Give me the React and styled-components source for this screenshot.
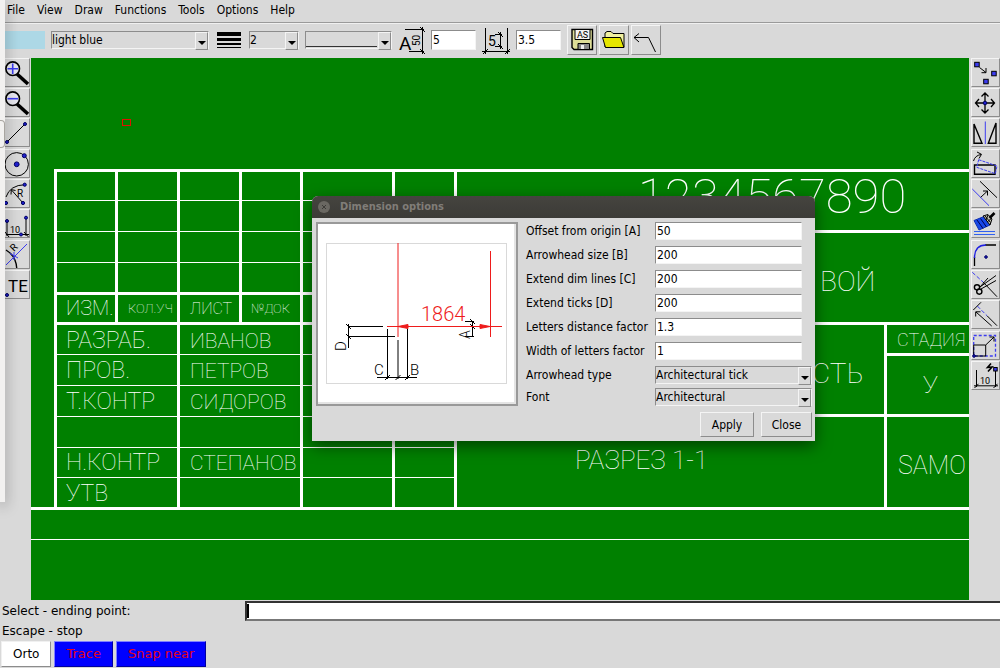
import React from "react";
import styled, { createGlobalStyle, css } from "styled-components";

const face = "#d9d9d9";
const uiFont = '"DejaVu Sans Condensed", "DejaVu Sans", sans-serif';
const drawingFont = 'Roboto, "Liberation Sans", sans-serif';
const blue = "#3c3cf0";

const GlobalStyle = createGlobalStyle`
  * { box-sizing: border-box; }
  body {
    margin: 0;
    background: ${face};
    color: #000;
    font: 12px/16px ${uiFont};
    overflow: hidden;
  }
  button, input, select { font: inherit; color: inherit; margin: 0; border-radius: 0; }
`;

const raised = css`
  border: 1px solid;
  border-color: #f4f4f4 #8c8c8c #8c8c8c #f4f4f4;
`;
const sunken = css`
  border: 1px solid;
  border-color: #8c8c8c #f4f4f4 #f4f4f4 #8c8c8c;
`;

const Window = styled.div`
  position: relative;
  display: flex;
  flex-direction: column;
  min-height: 100vh;
`;

const MenuBar = styled.nav`
  display: flex;
  gap: 12px;
  padding: 2px 7px 4px;
  border-bottom: 1px solid #9a9a9a;
`;
const MenuItem = styled.a`
  color: inherit;
  text-decoration: none;
`;

const Toolbar = styled.div`
  display: flex;
  align-items: center;
  gap: 6px;
  padding: 1px 5px 3px;
  border-top: 1px solid #f0f0f0;
`;
const Swatch = styled.span`
  width: 40px;
  height: 18px;
  background: #add8e6;
`;
const ButtonGroup = styled.div`
  display: flex;
  gap: 2px;
`;
const ToolIcon = styled.svg`
  display: block;
  flex: none;
  overflow: visible;
  fill: none;
  stroke: #000;
  text { stroke: none; fill: #000; font-family: ${drawingFont}; font-weight: 400; }
`;

const SelectBox = styled.span`
  position: relative;
  display: block;
  flex: none;
  width: ${(p) => p.$width}px;
  height: 18px;
  ${sunken}
  &::before {
    content: "";
    position: absolute;
    top: 0;
    right: 0;
    width: 11px;
    height: 16px;
    background: ${face};
    ${raised}
    pointer-events: none;
  }
  &::after {
    content: "";
    position: absolute;
    right: 2px;
    bottom: 3px;
    border: solid transparent;
    border-width: 4px 4px 0;
    border-top-color: #000;
    pointer-events: none;
  }
`;
const SelectField = styled.select`
  display: block;
  appearance: none;
  width: 100%;
  height: 16px;
  padding: 0 12px 0 0;
  border: 0;
  outline: 0;
  line-height: 16px;
  background: ${(p) => (p.$line ? "linear-gradient(#333, #333) 0 14px / calc(100% - 14px) 1px no-repeat" : face)};
`;
const TextField = styled.input`
  width: ${(p) => p.$width}px;
  height: ${(p) => p.$height}px;
  padding: 0 1px;
  background: #fff;
  outline: 0;
  ${sunken}
`;

const Workspace = styled.div`
  display: flex;
  height: 542px;
`;
const ToolColumn = styled.div`
  flex: none;
  width: 31px;
  padding-left: ${(p) => p.$inset}px;
`;
const ToolButton = styled.button`
  display: block;
  width: ${(p) => p.$width || 29}px;
  height: ${(p) => p.$height || 29}px;
  padding: 0;
  background: ${face};
  ${raised}
  ${ToolColumn} & { margin-bottom: 1px; }
  ${ToolColumn} &:nth-child(3n) { margin-bottom: 2px; }
`;
const Canvas = styled.main`
  flex: 1;
  min-width: 0;
  overflow: hidden;
  background: #008000;
`;
const Drawing = styled.svg`
  display: block;
  fill: none;
  stroke: #fff;
  text { stroke: none; fill: #fff; font-family: ${drawingFont}; font-weight: 100; }
`;

const StatusArea = styled.footer`
  padding: 1px 0 0 1px;
  font-family: "DejaVu Sans", sans-serif;
`;
const StatusRow = styled.div`
  display: flex;
  align-items: center;
`;
const Prompt = styled.label`
  width: 244px;
  padding-left: 1px;
  line-height: 20px;
`;
const CommandInput = styled.input`
  flex: 1;
  min-width: 0;
  height: 20px;
  padding: 0 2px;
  border: 2px solid #333;
  border-right: 0;
  border-bottom-color: #777;
  outline: 0;
  background: linear-gradient(#000, #000) 0 1px / 2px 14px no-repeat #fff;
`;
const ModeRow = styled.div`
  display: flex;
  gap: 3px;
`;
const ModeButton = styled.button`
  height: 26px;
  padding: 0 11px;
  background: ${(p) => (p.$on ? "#0000ff" : "#fff")};
  color: ${(p) => (p.$on ? "#e00020" : "#000")};
  font-size: ${(p) => (p.$on ? 13 : 12)}px;
  border: 1px solid;
  border-color: ${(p) => (p.$on ? "#8080ff #0000a0 #0000a0 #8080ff" : "#f0f0f0 #8c8c8c #8c8c8c #f0f0f0")};
`;

const BackWindow = styled.div`
  position: absolute;
  top: 0;
  left: 0;
  width: 5px;
  height: 502px;
  background: #f2f1f0;
  box-shadow: 0 4px 14px rgba(0, 0, 0, 0.4);
`;
const BackScroll = styled.div`
  width: 5px;
  height: 28px;
  margin-top: 120px;
  border: 1px solid #a8a5a0;
  border-left: 0;
  border-radius: 0 4px 4px 0;
`;

const Dialog = styled.section`
  position: absolute;
  top: 196px;
  left: 312px;
  width: 503px;
  background: ${face};
  border-radius: 6px 6px 0 0;
  box-shadow: 0 5px 16px rgba(0, 0, 0, 0.5);
`;
const TitleBar = styled.header`
  display: flex;
  align-items: center;
  gap: 10px;
  height: 22px;
  padding-left: 6px;
  border-radius: 6px 6px 0 0;
  background: linear-gradient(#45443f, #3c3b37);
  color: #807d78;
  font: bold 11px/22px ${uiFont};
`;
const CloseDot = styled.button`
  width: 12px;
  height: 12px;
  padding: 0;
  border: 0;
  border-radius: 50%;
  background: #6a6862;
  svg { display: block; stroke: #3c3b37; }
`;
const DialogBody = styled.form`
  display: flex;
  gap: 8px;
  padding: 0 3px 4px 4px;
`;
const PreviewFrame = styled.div`
  flex: none;
  width: 202px;
  height: 184px;
  margin-top: 4px;
  border: 2px solid #999;
  background: #fff;
  box-shadow: inset -2px -2px #e4e4e4;
`;
const Preview = styled.svg`
  display: block;
  fill: none;
  stroke: #000;
  text { stroke: none; fill: #000; font-family: ${drawingFont}; font-weight: 300; }
`;
const PreviewValue = styled.g`
  text { fill: #ee1c1c; }
`;
const Form = styled.div`
  flex: 1;
  padding-top: 1px;
`;
const FormRow = styled.div`
  display: flex;
  align-items: center;
  height: ${(p) => (p.$tight ? 22 : 24)}px;
`;
const ChoiceRows = styled.div`
  padding-top: 1px;
`;
const FormLabel = styled.label`
  width: 129px;
`;
const Actions = styled.div`
  display: flex;
  justify-content: flex-end;
  gap: 7px;
  padding-top: 4px;
`;
const PushButton = styled.button`
  width: ${(p) => p.$width}px;
  height: 25px;
  padding: 0;
  background: ${face};
  ${raised}
`;

function Dropdown({ width, value, label, id, line }) {
  return (
    <SelectBox $width={width}>
      <SelectField id={id} aria-label={label} $line={line} defaultValue={value}>
        <option value={value}>{value}</option>
      </SelectField>
    </SelectBox>
  );
}

const Dot = ({ x, y, r = 2 }) => <circle cx={x} cy={y} r={r} fill="#2020d0" stroke="#000060" strokeWidth="1" />;

function Glass({ plus }) {
  return (
    <>
      <path d="M16 16L27 26" strokeWidth="3.6" />
      <circle cx="11.7" cy="10.7" r="6.8" strokeWidth="1.6" fill="#e8e8f0" />
      <path d={plus ? "M6.5 10.7H17M11.7 5.5V16" : "M6.5 10.7H17"} stroke={blue} strokeWidth="1.6" />
    </>
  );
}

const drawTools = [
  ["Zoom in", <Glass plus />],
  ["Zoom out", <Glass />],
  ["Line", <><path d="M6 24L24 6" /><Dot x={6} y={24} r={1.5} /><Dot x={24} y={6} r={1.5} /></>],
  ["Circle", <><circle cx="15.7" cy="15.3" r="11.7" /><Dot x={15.7} y={15.3} r={2.4} /><Dot x={23.3} y={6.7} /></>],
  ["Arc", <>
    <path d="M5 18Q9 6 24 5.7M22 24L10.7 11.2M10 15.5L10.3 10.6 14.5 11.5" />
    <text x="16" y="18" fontSize="10">R</text>
    <Dot x={23.7} y={5.7} r={1.6} /><Dot x={22} y={24} r={1.6} /><Dot x={5} y={24} r={1.6} />
  </>],
  ["Dimension", <>
    <path d="M6 12V27M25 9V27M5 25.5H28M23 23L27.5 28M4 23L8 28" />
    <text x="9" y="24" fontSize="9">10</text>
    <Dot x={6} y={12} r={1.5} /><Dot x={25} y={8.7} r={1.5} /><Dot x={20} y={25.5} r={1.5} />
  </>],
  ["Radius dimension", <>
    <path d="M5 10Q15 16 15.7 28" strokeWidth="1.4" />
    <path d="M5 25L26 4" stroke={blue} />
    <path d="M9 13.5L17 18M13 12V20" stroke={blue} />
    <text fontSize="10" transform="translate(13 12) rotate(-45)">R</text>
  </>],
  ["Text", <><text x="7" y="22" fontSize="17">TE</text><Dot x={6} y={25} r={1.5} /></>],
];

const Square = ({ x, y }) => <rect x={x - 2} y={y - 2} width="4.5" height="4.5" fill={blue} />;

const editTools = [
  ["Copy", <>
    <Square x={5.7} y={6.3} /><Square x={22.7} y={15.3} /><Square x={14.7} y={23.3} />
    <path d="M8.5 9.5L15 14.5M10.5 14.7H15V10" />
  </>],
  ["Move", <>
    <path d="M14 6V24M5 15H23M10.5 8.5L14 5 17.5 8.5M10.5 21.5L14 25 17.5 21.5M8 11L4.5 15 8 19M20 11L23.5 15 20 19" strokeWidth="1.3" />
    <Dot x={14} y={15} r={1.8} />
  </>],
  ["Mirror", <>
    <path d="M3 6V25.3H11ZM25 5V25.3H17.3Z" strokeWidth="1.4" />
    <path d="M14.3 3.5V26" stroke={blue} />
  </>],
  ["Rotate", <>
    <path d="M3.5 16H24V25.3H3.5Z" strokeWidth="1.4" />
    <path d="M7.7 10.7L26 17 24.3 24.7 5.7 18.3Z" stroke={blue} strokeDasharray="3 1" />
    <path d="M2.5 12Q4 6.5 10 5.5M6 3L10.5 5.3 8 9.5" />
  </>],
  ["Offset", <>
    <path d="M1.3 10L18 26.7" stroke={blue} /><path d="M9 2.3L26 18.7M9.7 18.3L16.5 12M12 12H16.5V16.5" />
  </>],
  ["Match properties", <>
    <path d="M3 11.5L13 7.5 19 16 8 21Z" fill="#1848e8" stroke="#1030b0" />
    <path d="M6 11L12 19.5M9.5 9.5L15.5 18" stroke="#000050" />
    <path d="M12 7L17 5.5 21 10 19 16Z" fill="#c8c8b8" />
    <path d="M14 7L19.5 13.5M17 6L15 11M21 9L16 13" />
    <path d="M18.5 9L23.5 4" strokeWidth="2.6" />
    <path d="M3 22.5H24M3 25.5H24" stroke="#3060f0" />
  </>],
  ["Fillet", <>
    <path d="M3.5 26V17M14 5H25" strokeWidth="1.3" /><path d="M3.5 18Q3.5 5 15 5" stroke="#2020e0" strokeWidth="1.4" />
    <Dot x={15} y={17} r={1.3} />
  </>],
  ["Trim", <>
    <path d="M1.3 2.3L12 12" stroke={blue} strokeDasharray="4 2" />
    <path d="M12 12L26 26.7M9 17L25 5.5M10 19L25 10.5M9 17L17 8" />
    <circle cx="6" cy="17.3" r="2.6" strokeWidth="1.4" /><circle cx="8.3" cy="21.6" r="2.6" strokeWidth="1.4" />
  </>],
  ["Extend", <>
    <path d="M2.3 10L10 2.3M16 15.7L26 25.7M20.7 26L5 12M4.7 16.5V11.8H9.5" />
    <path d="M6.3 6L16 15.7" stroke={blue} strokeDasharray="4 2" />
  </>],
  ["Scale", <>
    <path d="M2.7 4.5H24.5V25H2.7Z" stroke={blue} strokeDasharray="3 2" strokeWidth="1.3" />
    <path d="M2.7 14H14.7V25H2.7ZM14.7 14L23 6M18.5 6H23V10.5" />
    <Dot x={3} y={25} r={1.3} />
  </>],
  ["Edit dimension", <>
    <path d="M5.5 9V26M24.5 8V26M3 24.8H27M3.5 27L7.5 22.8M22.5 27L26.5 22.8" />
    <text x="9" y="23" fontSize="9">10</text>
    <path d="M20 2.5L16.5 6.5 21 6 17 10.5" strokeWidth="1.6" />
    <rect x="22.7" y="6.5" width="3.5" height="3.5" fill={blue} />
  </>],
];

function IconButton({ label, children, width = 29, height = 29 }) {
  return (
    <ToolButton type="button" aria-label={label} $width={width} $height={height}>
      <ToolIcon width={width - 2} height={height - 2} viewBox={`1 1 ${width - 2} ${height - 2}`}>{children}</ToolIcon>
    </ToolButton>
  );
}

const labels = [
  [66, 315, 20, "ИЗМ."], [128, 313, 13, "КОЛ.УЧ"], [190, 314, 16, "ЛИСТ"], [251, 313, 13, "№ДОК"],
  [66, 348, 23, "РАЗРАБ."], [190, 348, 21, "ИВАНОВ"],
  [66, 378, 23, "ПРОВ."], [190, 378, 21, "ПЕТРОВ"],
  [66, 409, 23, "Т.КОНТР"], [190, 409, 21, "СИДОРОВ"],
  [66, 470, 23, "Н.КОНТР"], [190, 470, 21, "СТЕПАНОВ"],
  [66, 501, 23, "УТВ"],
  [638, 213, 49, "1234567890"],
  [820, 291, 28, "ВОЙ"], [812, 383, 28, "СТЬ"],
  [897, 346, 18, "СТАДИЯ"], [923, 393, 24, "У"], [898, 474, 25, "SAMO"],
  [575, 469, 26, "РАЗРЕЗ 1-1"],
];

function SheetDrawing() {
  return (
    <Drawing width="1600" height="542" viewBox="31 58 1600 542" shapeRendering="crispEdges">
      <path strokeWidth="1" d="M55 200.5H455M55 231.5H455M55 262.5H455M55 354.5H455M55 385.5H455M55 416.5H455M55 447.5H455M55 477.5H455M31 539.5H1631" />
      <path strokeWidth="3" strokeLinecap="square" d="M55.5 170.5H1631M55.5 170.5V508.5M116.5 170.5V323.5M178.5 170.5V508.5M240.5 170.5V323.5M301.5 170.5V508.5M393.5 170.5V508.5M455.5 170.5V508.5M55.5 293.5H455.5M55.5 323.5H1631M455.5 231.5H1631M455.5 415.5H1631M885.5 323.5V508.5M885.5 354.5H1631M31 508.5H1631" />
      <rect x="122.5" y="119.5" width="8" height="6" stroke="#e01000" />
      {labels.map(([x, y, size, text]) => (
        <text key={text} x={x} y={y} fontSize={size}>{text}</text>
      ))}
    </Drawing>
  );
}

function DimensionPreview() {
  return (
    <Preview width="198" height="180" viewBox="318 224 198 180">
      <rect x="326.5" y="243.5" width="180" height="140" stroke="#d9d9d9" />
      <path d="M348 326.5H383M348 336.5H395M348.5 324V348M387.5 329V379M398 340V379M407.5 329V379M377 377.5H417M472.5 321V337M465 321.5H474M465 336.5H474" />
      <path d="M346 324L351 329M346 334L351 339M385 380L390 375M395.5 380L400.5 375M405 380L410 375M470 319L475 324M470 324L475 329" />
      <PreviewValue stroke="#ee1c1c">
        <path d="M398 243V337M490.5 251V337M387 326.5H502" />
        <path d="M398 326.5L408 324.5V328.5ZM490 326.5L480 324.5V328.5Z" fill="#ee1c1c" />
        <text x="421" y="321" fontSize="20">1864</text>
      </PreviewValue>
      <text x="374" y="375" fontSize="15">C</text>
      <text x="410" y="375" fontSize="15">B</text>
      <text fontSize="15" transform="translate(346 351) rotate(-90)">D</text>
      <text fontSize="14" transform="translate(470 339) rotate(-90)">A</text>
    </Preview>
  );
}

const fields = [
  ["offset", "Offset from origin [A]", "50"],
  ["arrow", "Arrowhead size [B]", "200"],
  ["extend", "Extend dim lines [C]", "200"],
  ["ticks", "Extend ticks [D]", "200"],
  ["distance", "Letters distance factor", "1.3"],
  ["letters", "Width of letters factor", "1"],
];

export default function App() {
  return (
    <Window>
      <GlobalStyle />
      <MenuBar>
        {["File", "View", "Draw", "Functions", "Tools", "Options", "Help"].map((m) => (
          <MenuItem key={m} href="#">{m}</MenuItem>
        ))}
      </MenuBar>
      <Toolbar>
        <Swatch />
        <Dropdown width={158} value="light blue" label="Colour" />
        <ToolIcon width="28" height="18" viewBox="0 0 28 18" shapeRendering="crispEdges">
          <path d="M2 3H26" strokeWidth="4" /><path d="M2 8.5H26" strokeWidth="3" />
          <path d="M2 13H26" strokeWidth="2" /><path d="M2 16.5H26" />
        </ToolIcon>
        <Dropdown width={50} value="2" label="Line width" />
        <Dropdown width={87} value="" label="Line type" line />
        <ToolIcon width="27" height="27" viewBox="398 27 27 27">
          <text x="399" y="50" fontSize="19">A</text>
          <path d="M405 29.5H424M422.5 27V54M409 51.5H424M420 27L425 32M420 49L425 54" />
          <text fontSize="10" transform="translate(420 46) rotate(-90)">50</text>
        </ToolIcon>
        <TextField $width={45} $height={20} defaultValue="5" aria-label="Text height" />
        <ToolIcon width="28" height="27" viewBox="483 27 28 27">
          <path d="M486.5 28V54M508.5 28V54M483 51.5H511M484 54L489 49M506 54L511 49M496 34.5H503M496 46.5H503M501.5 32V49M499 32L504 37M499 44L504 49" />
          <text x="489" y="46" fontSize="14">5</text>
        </ToolIcon>
        <TextField $width={45} $height={20} defaultValue="3.5" aria-label="Dimension text height" />
        <ButtonGroup>
          <IconButton label="Save as" width={30} height={30}>
            <path d="M5 4.5H25.5V24.5H7L5 22.5Z" fill="#dede98" strokeWidth="1.4" />
            <path d="M8 4.5H23V14.5H8Z" fill="#f4f4f4" />
            <text x="10" y="13" fontSize="9">AS</text>
            <path d="M11 24.5V18.5H22.5V24.5Z" fill="#888" />
            <path d="M14 20H17V24H14Z" fill="#eee" stroke="none" />
          </IconButton>
          <IconButton label="Open" width={30} height={30}>
            <path d="M6 22V8L8 6.5H12L14 8.5H25V22Z" fill="#f0f0a0" />
            <path d="M3.5 12.5H21.5L25 22.5H6.5Z" fill="#e6e600" />
          </IconButton>
          <IconButton label="Undo" width={30} height={30}>
            <path d="M3 12.5H17.5L24.5 27M8 8.5L3 12.5 8 17" />
          </IconButton>
        </ButtonGroup>
      </Toolbar>
      <Workspace>
        <ToolColumn $inset={1}>
          {drawTools.map(([label, icon]) => <IconButton key={label} label={label}>{icon}</IconButton>)}
        </ToolColumn>
        <Canvas><SheetDrawing /></Canvas>
        <ToolColumn $inset={2}>
          {editTools.map(([label, icon]) => <IconButton key={label} label={label}>{icon}</IconButton>)}
        </ToolColumn>
      </Workspace>
      <StatusArea>
        <StatusRow>
          <Prompt htmlFor="command">Select - ending point:</Prompt>
          <CommandInput id="command" />
        </StatusRow>
        <StatusRow><Prompt as="span">Escape - stop</Prompt></StatusRow>
        <ModeRow>
          <ModeButton type="button">Orto</ModeButton>
          <ModeButton type="button" $on>Trace</ModeButton>
          <ModeButton type="button" $on>Snap near</ModeButton>
        </ModeRow>
      </StatusArea>
      <BackWindow><BackScroll /></BackWindow>
      <Dialog role="dialog" aria-labelledby="dialog-title">
        <TitleBar>
          <CloseDot type="button" aria-label="Close window">
            <svg width="12" height="12"><path d="M4 4L8 8M8 4L4 8" /></svg>
          </CloseDot>
          <span id="dialog-title">Dimension options</span>
        </TitleBar>
        <DialogBody>
          <PreviewFrame><DimensionPreview /></PreviewFrame>
          <Form>
            {fields.map(([id, label, value]) => (
              <FormRow key={id}>
                <FormLabel htmlFor={id}>{label}</FormLabel>
                <TextField id={id} $width={147} $height={18} defaultValue={value} />
              </FormRow>
            ))}
            <ChoiceRows>
              <FormRow $tight>
                <FormLabel htmlFor="arrow-type">Arrowhead type</FormLabel>
                <Dropdown id="arrow-type" width={157} value="Architectural tick" />
              </FormRow>
              <FormRow $tight>
                <FormLabel htmlFor="font">Font</FormLabel>
                <Dropdown id="font" width={157} value="Architectural" />
              </FormRow>
            </ChoiceRows>
            <Actions>
              <PushButton type="button" $width={54}>Apply</PushButton>
              <PushButton type="button" $width={51}>Close</PushButton>
            </Actions>
          </Form>
        </DialogBody>
      </Dialog>
    </Window>
  );
}
